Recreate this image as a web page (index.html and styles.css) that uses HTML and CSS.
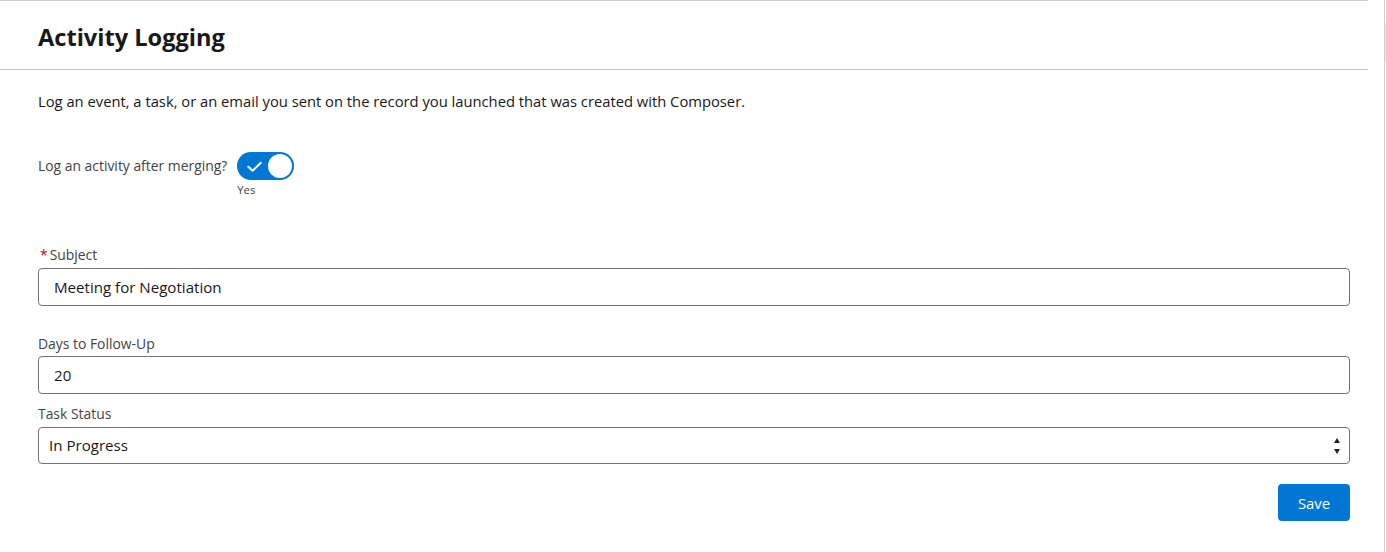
FILE: index.html
```html
<!DOCTYPE html>
<html lang="en">
<head>
<meta charset="utf-8">
<title>Activity Logging</title>
<link rel="stylesheet" href="styles.css">
</head>
<body>
<div class="page">
  <main class="card">
    <header class="card-header">
      <h1 class="title">Activity Logging</h1>
    </header>
    <section class="card-body">
      <p class="desc">Log an event, a task, or an email you sent on the record you launched that was created with Composer.</p>

      <div class="toggle-row">
        <span class="toggle-label">Log an activity after merging?</span>
        <div class="toggle-wrap">
          <span class="toggle">
            <svg class="check" viewBox="0 0 16 16" width="17" height="17" aria-hidden="true">
              <path d="M2.2 8.3 L6.2 12 L13.8 4.6" fill="none" stroke="#fff" stroke-width="2" stroke-linecap="round" stroke-linejoin="round"/>
            </svg>
            <span class="knob"></span>
          </span>
          <span class="toggle-state">Yes</span>
        </div>
      </div>

      <div class="field field-subject">
        <label class="field-label"><abbr class="req">*</abbr>Subject</label>
        <div class="input">Meeting for Negotiation</div>
      </div>

      <div class="field field-days">
        <label class="field-label">Days to Follow-Up</label>
        <div class="input">20</div>
      </div>

      <div class="field field-status">
        <label class="field-label">Task Status</label>
        <div class="select">
          <span class="select-value">In Progress</span>
          <span class="arrows"><span class="up"></span><span class="down"></span></span>
        </div>
      </div>

      <div class="actions">
        <button class="btn">Save</button>
      </div>
    </section>
  </main>
  <aside class="rail"><span class="thumb"></span></aside>
</div>
</body>
</html>
```

FILE: styles.css
```css
* { box-sizing: border-box; }
html, body { margin: 0; padding: 0; background: #fff; }
body {
  font-family: "Open Sans", "Noto Sans", sans-serif;
  color: #181818;
  height: 552px;
  overflow: hidden;
}
.page {
  display: grid;
  grid-template-columns: 1368px 1fr;
  height: 552px;
}
.card {
  border-top: 1px solid #c9c9c9;
}
.card-header {
  height: 69px;
  border-bottom: 1px solid #c9c9c9;
  padding: 3px 0 0 38px;
  display: flex;
  align-items: center;
}
.title {
  margin: 0;
  font-size: 23.6px;
  font-weight: 700;
  color: #181818;
}
.card-body {
  padding: 21px 18px 0 38px;
}
.desc {
  margin: 0;
  font-size: 14.75px;
  line-height: 20px;
  color: #181818;
}
.toggle-row {
  display: flex;
  align-items: flex-start;
  margin-top: 41px;
  gap: 10px;
}
.toggle-label {
  font-size: 13.9px;
  color: #444;
  line-height: 28px;
}
.toggle-wrap {
  display: flex;
  flex-direction: column;
}
.toggle {
  width: 57px;
  height: 28px;
  border-radius: 14px;
  background: #0176d3;
  display: flex;
  align-items: center;
  justify-content: space-between;
  padding: 0 2px 0 9px;
}
.check { display: block; }
.knob {
  width: 24px;
  height: 24px;
  border-radius: 50%;
  background: #fff;
}
.toggle-state {
  font-size: 11.3px;
  color: #444;
  line-height: 14px;
  margin-top: 3px;
}
.field { display: flex; flex-direction: column; }
.field-subject { margin-top: 49px; }
.field-days { margin-top: 29px; }
.field-status { margin-top: 11px; }
.field-label {
  font-size: 13.9px;
  color: #444;
  line-height: 18px;
  margin-bottom: 4px;
}
.field-days .field-label { margin-bottom: 3px; }
.req {
  color: #ba0517;
  text-decoration: none;
  margin: 0 2px 0 2px;
  border: 0;
}
.input {
  height: 38px;
  border: 1px solid #747474;
  border-radius: 4px;
  padding: 0 15px;
  display: flex;
  align-items: center;
  font-size: 15.1px;
  color: #181818;
}
.select {
  height: 37px;
  border: 1px solid #747474;
  border-radius: 4px;
  padding: 0 9px 0 10px;
  display: flex;
  align-items: center;
  justify-content: space-between;
  font-size: 15.1px;
  color: #181818;
}
.select-value { position: relative; top: -1px; }
.arrows {
  display: flex;
  flex-direction: column;
  gap: 6px;
}
.arrows .up, .arrows .down {
  width: 0; height: 0;
  border-left: 3px solid transparent;
  border-right: 3px solid transparent;
}
.arrows .up { border-bottom: 5px solid #222; }
.arrows .down { border-top: 5px solid #222; }
.actions {
  display: flex;
  justify-content: flex-end;
  margin-top: 20px;
}
.btn {
  width: 72px;
  height: 37px;
  border: 0;
  border-radius: 4px;
  background: #0176d3;
  color: #fff;
  font-family: inherit;
  font-size: 14.9px;
  padding: 0;
}
.rail {
  position: relative;
  border-right: 1px solid #d0d0d0;
  margin-right: 1px;
}
.thumb {
  position: absolute;
  right: -3px;
  top: 23px;
  width: 2px;
  height: 38px;
  background: #e6e6e6;
}
```
